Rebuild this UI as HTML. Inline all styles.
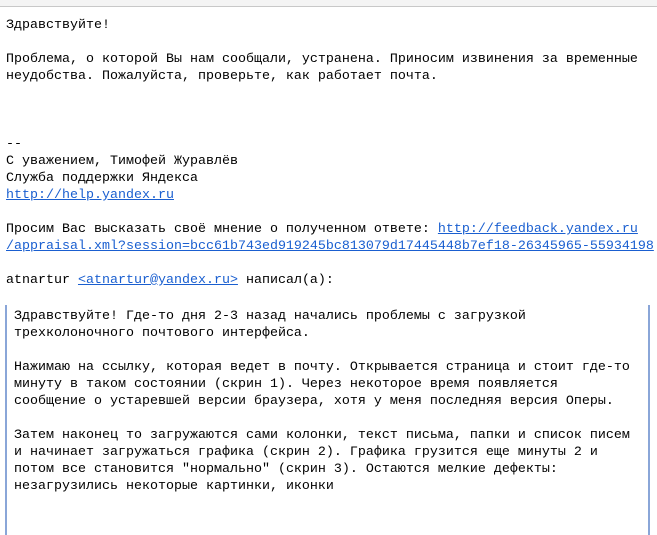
<html><head><style>
body{margin:0;width:657px;height:525px;overflow:hidden;background:#fff;font-family:"Liberation Mono","DejaVu Sans Mono",monospace;font-size:13.33px;color:#000}
.top{position:absolute;left:0;top:0;width:657px;height:6px;background:#f4f4f4;border-bottom:1px solid #c8c8c8}
.t{position:absolute;left:6px;top:17px;line-height:17px;white-space:pre}
a{color:#1a5fd0;text-decoration:underline}
.q{position:absolute;left:5px;top:305px;width:641px;height:230px;border-left:2px solid #8aa6d8;border-right:2px solid #8aa6d8}
.qt{position:absolute;left:14px;top:308px;line-height:17px;white-space:pre}
</style></head><body>
<div class="top"></div>
<div class="t">Здравствуйте!

Проблема, о которой Вы нам сообщали, устранена. Приносим извинения за временные
неудобства. Пожалуйста, проверьте, как работает почта.



--
С уважением, Тимофей Журавлёв
Служба поддержки Яндекса
<a>http://help.yandex.ru</a>

Просим Вас высказать своё мнение о полученном ответе: <a>http://feedback.yandex.ru</a>
<a>/appraisal.xml?session=bcc61b743ed919245bc813079d17445448b7ef18-26345965-55934198</a>

atnartur <a>&lt;atnartur@yandex.ru&gt;</a> написал(а):</div>
<div class="q"></div>
<div class="qt">Здравствуйте! Где-то дня 2-3 назад начались проблемы с загрузкой
трехколоночного почтового интерфейса.

Нажимаю на ссылку, которая ведет в почту. Открывается страница и стоит где-то
минуту в таком состоянии (скрин 1). Через некоторое время появляется
сообщение о устаревшей версии браузера, хотя у меня последняя версия Оперы.

Затем наконец то загружаются сами колонки, текст письма, папки и список писем
и начинает загружаться графика (скрин 2). Графика грузится еще минуты 2 и
потом все становится "нормально" (скрин 3). Остаются мелкие дефекты:
незагрузились некоторые картинки, иконки</div>
</body></html>
